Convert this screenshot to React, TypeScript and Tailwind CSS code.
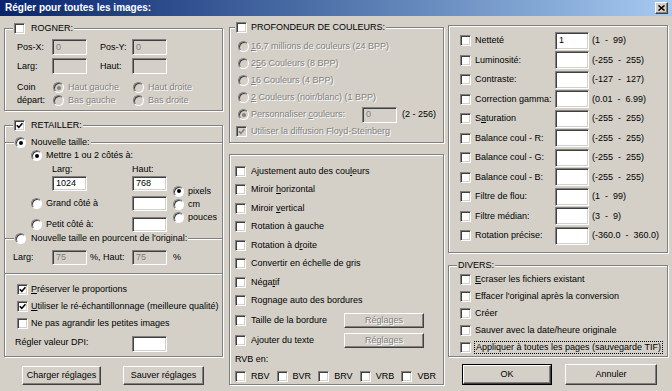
import type { ReactNode } from "react";

const dim = "text-[#808080] [text-shadow:1px_1px_0_#fff]";
const raised =
  "border border-t-white border-l-white border-b-[#404040] border-r-[#404040] bg-[#d4d0c8] shadow-[inset_-1px_-1px_0_#808080]";

function Check({ on = false, off = false }: { on?: boolean; off?: boolean }) {
  return (
    <span
      className={`flex h-[11px] w-[11px] shrink-0 items-center justify-center border border-t-[#808080] border-l-[#808080] border-b-white border-r-white shadow-[inset_1px_1px_0_#404040,inset_-1px_-1px_0_#d4d0c8] ${
        off ? "bg-[#d4d0c8]" : "bg-white"
      }`}
    >
      {on && (
        <svg width="7" height="7" viewBox="0 0 7 7">
          <path
            d="M0.8 3.2 L2.8 5.4 L6.4 1.2"
            fill="none"
            stroke={off ? "#808080" : "#000"}
            strokeWidth="1.6"
          />
        </svg>
      )}
    </span>
  );
}

function Radio({ on = false, off = false }: { on?: boolean; off?: boolean }) {
  return (
    <span
      className={`flex h-[11px] w-[11px] shrink-0 items-center justify-center rounded-full border border-t-[#808080] border-l-[#808080] border-b-white border-r-white shadow-[inset_1px_1px_0_#404040] ${
        off ? "bg-[#d4d0c8]" : "bg-white"
      }`}
    >
      {on && (
        <span
          className={`h-[4px] w-[4px] rounded-full ${
            off ? "bg-[#808080]" : "bg-black"
          }`}
        />
      )}
    </span>
  );
}

function Field({
  className = "",
  value = "",
  off = false,
}: {
  className?: string;
  value?: string;
  off?: boolean;
}) {
  return (
    <div
      className={`flex shrink-0 items-center border border-t-[#808080] border-l-[#808080] border-b-white border-r-white pl-[3px] shadow-[inset_1px_1px_0_#404040,inset_-1px_-1px_0_#d4d0c8] ${
        off ? "bg-[#d4d0c8] text-[#808080]" : "bg-white"
      } ${className}`}
    >
      {value}
    </div>
  );
}

function Group({
  className = "",
  legend,
  legendPos = "left-[8px]",
  children,
}: {
  className?: string;
  legend?: ReactNode;
  legendPos?: string;
  children?: ReactNode;
}) {
  return (
    <div
      className={`relative shrink-0 border border-[#808080] shadow-[inset_1px_1px_0_#fff,1px_1px_0_#fff] ${className}`}
    >
      {legend && (
        <div
          className={`absolute -top-[7px] flex h-[13px] items-center gap-[6px] bg-[#d4d0c8] px-[1px] ${legendPos}`}
        >
          {legend}
        </div>
      )}
      {children}
    </div>
  );
}

function Sep({ className = "", legend }: { className?: string; legend?: ReactNode }) {
  return (
    <div
      className={`relative border-t border-b border-t-[#808080] border-b-white ${className}`}
    >
      {legend && (
        <div className="absolute -top-[7px] left-[9px] flex h-[13px] items-center gap-[5px] bg-[#d4d0c8] px-[1px]">
          {legend}
        </div>
      )}
    </div>
  );
}

const rightRows: [ReactNode, string, string][] = [
  ["Netteté", "1", "(1  -  99)"],
  ["Luminosité:", "", "(-255  -  255)"],
  ["Contraste:", "", "(-127  -  127)"],
  ["Correction gamma:", "", "(0.01  -  6.99)"],
  [<>S<u>a</u>turation</>, "", "(-255  -  255)"],
  ["Balance coul - R:", "", "(-255  -  255)"],
  ["Balance coul - G:", "", "(-255  -  255)"],
  ["Balance coul - B:", "", "(-255  -  255)"],
  ["Filtre de flou:", "", "(1  -  99)"],
  ["Filtre médian:", "", "(3  -  9)"],
  ["Rotation précise:", "", "(-360.0  -  360.0)"],
];

const midChecks: ReactNode[] = [
  <>Ajustement auto des cou<u>l</u>eurs</>,
  <>Miroir <u>h</u>orizontal</>,
  <>Miroir <u>v</u>ertical</>,
  "Rotation à gauche",
  <>Rotation à d<u>r</u>oite</>,
  "Convertir en échelle de gris",
  <>Néga<u>t</u>if</>,
  "Rognage auto des bordures",
];

export default function App() {
  return (
    <div className="flex h-[391px] w-[672px] flex-col overflow-hidden bg-[#d4d0c8] font-['Liberation_Sans',Arial,sans-serif] text-[9px] leading-[11px] text-black">
      {/* title bar */}
      <div className="flex h-[16px] shrink-0 items-center justify-between bg-linear-to-r from-[#0a246a] to-[#a6caf0] pl-[5px] pr-[4px]">
        <span className="text-[10px] font-bold leading-[12px] text-white">
          Régler pour toutes les images:
        </span>
        <div className={`flex h-[12px] w-[13px] items-center justify-center ${raised}`}>
          <svg width="7" height="6" viewBox="0 0 7 6">
            <path d="M0.5 0.5 L6.5 5.5 M6.5 0.5 L0.5 5.5" stroke="#000" strokeWidth="1.5" />
          </svg>
        </div>
      </div>

      <div className="flex pl-[4px]">
        {/* left column */}
        <div className="flex w-[219px] shrink-0 flex-col">
          <Group
            className="mt-[12px] h-[83px]"
            legend={
              <>
                <Check />
                <span>ROGNER:</span>
              </>
            }
          >
            <div className="mt-[10px] flex h-[16px] items-center pl-[12px]">
              <span className="w-[35px]">Pos-X:</span>
              <Field className="h-[16px] w-[35px]" value="0" off />
              <span className="ml-[13px] w-[32px]">Pos-Y:</span>
              <Field className="h-[16px] w-[35px]" value="0" off />
            </div>
            <div className="mt-[3px] flex h-[16px] items-center pl-[12px]">
              <span className="w-[35px]">Larg:</span>
              <Field className="h-[16px] w-[35px]" off />
              <span className="ml-[13px] w-[32px]">Haut:</span>
              <Field className="h-[16px] w-[35px]" off />
            </div>
            <div className="mt-[7px] flex pl-[12px]">
              <div className="flex w-[36px] flex-col">
                <span className="flex h-[13px] items-center">Coin</span>
                <span className="flex h-[13px] items-center">départ:</span>
              </div>
              <div className="flex flex-col">
                <div className="flex h-[13px] items-center">
                  <div className="flex w-[80px] items-center gap-[4px]">
                    <Radio on off />
                    <span className={dim}>Haut gauche</span>
                  </div>
                  <div className="flex items-center gap-[4px]">
                    <Radio off />
                    <span className={dim}>Haut droite</span>
                  </div>
                </div>
                <div className="flex h-[13px] items-center">
                  <div className="flex w-[80px] items-center gap-[4px]">
                    <Radio off />
                    <span className={dim}>Bas gauche</span>
                  </div>
                  <div className="flex items-center gap-[4px]">
                    <Radio off />
                    <span className={dim}>Bas droite</span>
                  </div>
                </div>
              </div>
            </div>
          </Group>

          <Group
            className="mt-[14px] h-[232px]"
            legend={
              <>
                <Check on />
                <span>RETAILLER:</span>
              </>
            }
          >
            <Sep
              className="mt-[16px]"
              legend={
                <>
                  <Radio on />
                  <span>Nouvelle taille:</span>
                </>
              }
            />
            <div className="mt-[5px] flex h-[13px] items-center gap-[4px] pl-[26px]">
              <Radio on />
              <span>Mettre 1 ou 2 côtés à:</span>
            </div>
            <div className="mt-[1px] flex h-[12px] items-center pl-[47px]">
              <span className="w-[80px]">Larg:</span>
              <span>Haut:</span>
            </div>
            <div className="mt-[1px] flex">
              <div className="flex w-[168px] flex-col">
                <div className="flex h-[15px] pl-[47px]">
                  <Field className="h-[15px] w-[35px]" value="1024" />
                  <Field className="ml-[45px] h-[15px] w-[35px]" value="768" />
                </div>
                <div className="mt-[5px] flex h-[15px] items-center pl-[26px]">
                  <Radio />
                  <span className="ml-[4px] w-[86px]">Grand côté à</span>
                  <Field className="h-[15px] w-[35px]" />
                </div>
                <div className="mt-[6px] flex h-[15px] items-center pl-[26px]">
                  <Radio />
                  <span className="ml-[4px] w-[86px]">Petit côté à:</span>
                  <Field className="h-[15px] w-[35px]" />
                </div>
              </div>
              <div className="mt-[8px] flex flex-col">
                <div className="flex h-[14px] items-center gap-[4px]">
                  <Radio on />
                  <span>pixels</span>
                </div>
                <div className="flex h-[13px] items-center gap-[4px]">
                  <Radio />
                  <span>cm</span>
                </div>
                <div className="flex h-[13px] items-center gap-[4px]">
                  <Radio />
                  <span>pouces</span>
                </div>
              </div>
            </div>
            <Sep
              className="mt-[6px]"
              legend={
                <>
                  <Radio />
                  <span>Nouvelle taille en pourcent de l'original:</span>
                </>
              }
            />
            <div className="mt-[10px] flex h-[15px] items-center pl-[8px]">
              <span className="w-[39px]">Larg:</span>
              <Field className="h-[15px] w-[35px]" value="75" off />
              <span className="ml-[3px] w-[42px]">%, Haut:</span>
              <Field className="h-[15px] w-[35px]" value="75" off />
              <span className="ml-[6px]">%</span>
            </div>
            <Sep className="mt-[8px]" />
            <div className="mt-[8px] flex h-[13px] items-center gap-[3px] pl-[12px]">
              <Check on />
              <span>
                <u>P</u>réserver le proportions
              </span>
            </div>
            <div className="mt-[4px] flex h-[13px] items-center gap-[3px] pl-[12px]">
              <Check on />
              <span>
                <u>U</u>tiliser le ré-échantillonnage (meilleure qualité)
              </span>
            </div>
            <div className="mt-[4px] flex h-[13px] items-center gap-[3px] pl-[12px]">
              <Check />
              <span>Ne pas agrandir les petites images</span>
            </div>
            <div className="mt-[6px] flex h-[16px] items-start pl-[10px]">
              <span className="w-[117px] pt-[1px]">Régler valeur DPI:</span>
              <Field className="h-[16px] w-[35px]" />
            </div>
          </Group>

          <div className="mt-[9px] flex">
            <div className={`ml-[18px] flex h-[19px] w-[79px] items-center justify-center ${raised}`}>
              Charger réglages
            </div>
            <div className={`ml-[22px] flex h-[19px] w-[81px] items-center justify-center ${raised}`}>
              Sauver réglages
            </div>
          </div>
        </div>

        {/* middle column */}
        <div className="ml-[6px] flex w-[215px] shrink-0 flex-col">
          <Group
            className="mt-[11px] h-[116px] pt-[10px]"
            legendPos="left-[5px]"
            legend={
              <>
                <Check />
                <span className="-ml-[2px]">PROFONDEUR DE COULEURS:</span>
              </>
            }
          >
            {[
              <>
                <u>1</u>6,7 millions de couleurs (24 BPP)
              </>,
              <>
                2<u>5</u>6 Couleurs (8 BPP)
              </>,
              <>
                <u>1</u>6 Couleurs (4 BPP)
              </>,
              <>
                <u>2</u> Couleurs (noir/blanc) (1 BPP)
              </>,
            ].map((label, i) => (
              <div key={i} className="flex h-[17px] items-center gap-[2px] pl-[8px]">
                <Radio off />
                <span className={dim}>{label}</span>
              </div>
            ))}
            <div className="flex h-[17px] items-center pl-[8px]">
              <Radio on off />
              <span className={`ml-[2px] w-[111px] ${dim}`}>
                Personnaliser <u>c</u>ouleurs:
              </span>
              <Field className="h-[16px] w-[35px]" value="0" off />
              <span className="ml-[5px]">(2 - 256)</span>
            </div>
            <div className="flex h-[17px] items-center gap-[4px] pl-[6px]">
              <Check on off />
              <span className={dim}>Utiliser la diffusion Floyd-Steinberg</span>
            </div>
          </Group>

          <Group className="mt-[11px] h-[231px] pt-[7px]">
            {midChecks.map((label, i) => (
              <div key={i} className="flex h-[18.5px] items-center gap-[5px] pl-[5px]">
                <Check />
                <span>{label}</span>
              </div>
            ))}
            <div className="flex h-[20px] items-center gap-[5px] pl-[5px]">
              <Check />
              <span className="w-[88px]">Taille de la bordure</span>
              <div className={`flex h-[15px] w-[80px] items-center justify-center ${raised} ${dim}`}>
                Réglages
              </div>
            </div>
            <div className="flex h-[20px] items-center gap-[5px] pl-[5px]">
              <Check />
              <span className="w-[88px]">Ajouter du texte</span>
              <div className={`flex h-[15px] w-[80px] items-center justify-center ${raised} ${dim}`}>
                Réglages
              </div>
            </div>
            <div className="mt-[2px] flex h-[14px] items-center pl-[5px]">RVB en:</div>
            <div className="mt-[3px] flex h-[14px] items-center pl-[5px]">
              {["RBV", "BVR", "BRV", "VRB", "VBR"].map((t) => (
                <div key={t} className="flex w-[41.8px] items-center gap-[5px]">
                  <Check />
                  <span>{t}</span>
                </div>
              ))}
            </div>
          </Group>
        </div>

        {/* right column */}
        <div className="ml-[4px] flex w-[220px] shrink-0 flex-col">
          <Group className="mt-[9px] h-[228px] pt-[5px]">
            {rightRows.map(([label, value, range], i) => (
              <div
                key={i}
                className={`flex items-center pl-[11px] ${i % 2 === 0 ? "h-[19px]" : "h-[20px]"}`}
              >
                <Check />
                <span className="ml-[4px] w-[80px]">{label}</span>
                <Field className="h-[18px] w-[34px]" value={value} />
                <span className="ml-[3px] whitespace-pre">{range}</span>
              </div>
            ))}
          </Group>

          <Group
            className="mt-[12px] h-[92px] pt-[5px]"
            legendPos="left-[8px]"
            legend={<span>DIVERS:</span>}
          >
            {[
              <>
                <u>E</u>craser les fichiers existant
              </>,
              "Effacer l'original après la conversion",
              "Créer",
              "Sauver avec la date/heure originale",
            ].map((label, i) => (
              <div key={i} className="flex h-[17px] items-center gap-[4px] pl-[11px]">
                <Check />
                <span>{label}</span>
              </div>
            ))}
            <div className="flex h-[17px] items-center gap-[3px] pl-[11px]">
              <Check />
              <span className="border border-dotted border-black px-[1px] leading-[11px]">
                Appliquer à toutes les pages (sauvegarde TIF)
              </span>
            </div>
          </Group>

          <div className="mt-[7px] flex">
            <div className="ml-[14px] flex h-[21px] w-[90px] border border-black">
              <div className={`flex flex-1 items-center justify-center ${raised}`}>OK</div>
            </div>
            <div className={`ml-[13px] flex h-[21px] w-[92px] items-center justify-center ${raised}`}>
              Annuler
            </div>
          </div>
        </div>
      </div>
    </div>
  );
}
